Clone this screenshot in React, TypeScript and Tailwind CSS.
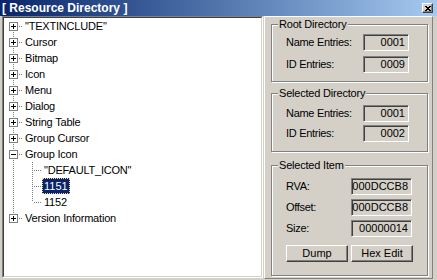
import React from "react"

type Box = "plus" | "minus" | null

function Gutter({ top, bottom, box }: { top: boolean; bottom: boolean; box: Box }) {
	return (
		<svg width="17" height="16" className="shrink-0" shapeRendering="crispEdges">
			{top && <line x1="7.5" y1="0" x2="7.5" y2="8" stroke="#808080" strokeDasharray="1 1" />}
			{bottom && <line x1="7.5" y1="8" x2="7.5" y2="16" stroke="#808080" strokeDasharray="1 1" />}
			<line x1={box ? 13 : 9} y1="8.5" x2="17" y2="8.5" stroke="#808080" strokeDasharray="1 1" />
			{box && (
				<>
					<rect x="3.5" y="4.5" width="8" height="8" fill="#fff" stroke="#808080" />
					<line x1="5" y1="8.5" x2="10" y2="8.5" stroke="#000" />
				</>
			)}
			{box === "plus" && <line x1="7.5" y1="6" x2="7.5" y2="11" stroke="#000" />}
		</svg>
	)
}

function Continue() {
	return (
		<svg width="19" height="16" className="shrink-0" shapeRendering="crispEdges">
			<line x1="7.5" y1="0" x2="7.5" y2="16" stroke="#808080" strokeDasharray="1 1" />
		</svg>
	)
}

const roots = [
	'"TEXTINCLUDE"',
	"Cursor",
	"Bitmap",
	"Icon",
	"Menu",
	"Dialog",
	"String Table",
	"Group Cursor",
	"Group Icon",
	"Version Information",
]
const children = ['"DEFAULT_ICON"', "1151", "1152"]

function Tree() {
	const rows: React.ReactNode[] = []
	roots.forEach((name, i) => {
		const expanded = name === "Group Icon"
		rows.push(
			<div key={name} className="flex h-[16px] items-center">
				<Gutter top={i > 0} bottom={i < roots.length - 1} box={expanded ? "minus" : "plus"} />
				<span className="px-[2px] leading-[16px] tracking-[-0.2px]">{name}</span>
			</div>
		)
		if (expanded) {
			children.forEach((c, j) => {
				const selected = c === "1151"
				rows.push(
					<div key={c} className="flex h-[16px] items-center">
						<Continue />
						<Gutter top bottom={j < children.length - 1} box={null} />
						<span
							className={
								selected
									? "h-[16px] border border-dotted border-[#f5db95] bg-[#0a246a] px-[1px] leading-[14px] text-white"
									: "px-[2px] leading-[16px] tracking-[-0.2px]"
							}
						>
							{c}
						</span>
					</div>
				)
			})
		}
	})
	return (
		<div className="ml-[2px] h-[262px] w-[261px] border border-t-[#808080] border-l-[#808080] border-r-white border-b-white">
			<div className="h-full w-full border border-t-[#404040] border-l-[#404040] border-r-[#d4d0c8] border-b-[#d4d0c8] bg-white pl-[2px]">
				{rows}
			</div>
		</div>
	)
}

function Field({ label, value, labelW, boxW }: { label: string; value: string; labelW: string; boxW: string }) {
	return (
		<div className="flex h-[17px] items-center pl-[14px]">
			<span className={`${labelW} tracking-[-0.3px]`}>{label}</span>
			<div
				className={`${boxW} flex h-[17px] items-center justify-end border border-t-[#808080] border-l-[#808080] border-r-white border-b-white pr-[3px] shadow-[inset_1px_1px_0_#404040]`}
			>
				{value}
			</div>
		</div>
	)
}

function Group({ title, className, children }: { title: string; className: string; children: React.ReactNode }) {
	return (
		<div
			className={`relative flex flex-col border border-[#808080] shadow-[inset_1px_1px_0_#fff,1px_1px_0_#fff] ${className}`}
		>
			<span className="absolute -top-[8px] left-[6px] bg-[#d4d0c8] px-[1px] leading-[14px] tracking-[-0.2px]">
				{title}
			</span>
			{children}
		</div>
	)
}

function Button({ children }: { children: React.ReactNode }) {
	return (
		<div className="flex h-[17px] w-[62px] items-center justify-center border border-t-white border-l-white border-r-[#404040] border-b-[#404040] shadow-[inset_-1px_-1px_0_#808080]">
			{children}
		</div>
	)
}

export default function App() {
	return (
		<div className="flex h-[280px] w-[437px] flex-col overflow-hidden bg-[#d4d0c8] font-['Liberation_Sans',Arial,sans-serif] text-[11px] text-black">
			<div className="flex h-[16px] shrink-0 items-center justify-between bg-gradient-to-r from-[#0a246a] to-[#a6caf0] pl-[2px] pr-[4px]">
				<span className="text-[12px] font-bold leading-[16px] text-white">[ Resource Directory ]</span>
				<div className="flex h-[10px] w-[11px] items-center justify-center border border-t-white border-l-white border-r-[#404040] border-b-[#404040] bg-[#d4d0c8] shadow-[inset_-1px_-1px_0_#808080]">
					<svg width="6" height="5" shapeRendering="crispEdges">
						<path d="M0 0L6 5M6 0L0 5" stroke="#000" strokeWidth="1.2" />
					</svg>
				</div>
			</div>
			<div className="flex">
				<Tree />
				<div className="ml-[1px] h-[263px] w-[169px] border border-t-white border-l-white border-r-[#808080] border-b-[#808080] pl-[6px] pr-[4px] pt-[7px]">
					<Group title="Root Directory" className="h-[58px] gap-[5px] pt-[9px]">
						<Field label="Name Entries:" value="0001" labelW="w-[77px]" boxW="w-[46px]" />
						<Field label="ID Entries:" value="0009" labelW="w-[77px]" boxW="w-[46px]" />
					</Group>
					<Group title="Selected Directory" className="mt-[11px] h-[59px] gap-[3px] pt-[11px]">
						<Field label="Name Entries:" value="0001" labelW="w-[77px]" boxW="w-[46px]" />
						<Field label="ID Entries:" value="0002" labelW="w-[77px]" boxW="w-[46px]" />
					</Group>
					<Group title="Selected Item" className="mt-[13px] h-[111px] gap-[4px] pt-[12px]">
						<Field label="RVA:" value="000DCCB8" labelW="w-[65px]" boxW="w-[61px]" />
						<Field label="Offset:" value="000DCCB8" labelW="w-[65px]" boxW="w-[61px]" />
						<Field label="Size:" value="00000014" labelW="w-[65px]" boxW="w-[61px]" />
						<div className="mt-[4px] flex gap-[3px] pl-[14px]">
							<Button>Dump</Button>
							<Button>Hex Edit</Button>
						</div>
					</Group>
				</div>
			</div>
		</div>
	)
}
